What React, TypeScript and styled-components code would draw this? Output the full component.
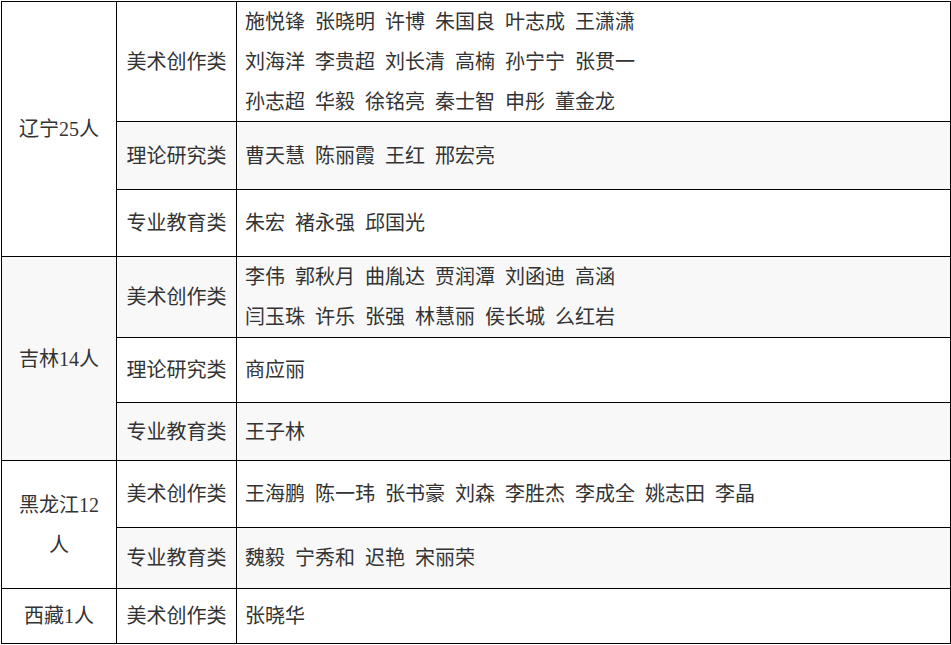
import styled, { createGlobalStyle } from "styled-components";

const GlobalStyle = createGlobalStyle`
  html, body {
    margin: 0;
    padding: 0;
    background: #ffffff;
  }
  body {
    font-family: "Liberation Serif", "Noto Sans CJK SC", serif;
    color: #333333;
  }
`;

const Page = styled.div`
  padding: 1px 0 0 1px;
`;

const Table = styled.div`
  display: grid;
  width: 950px;
  box-sizing: border-box;
  grid-template-columns: 115px 120px 714px;
  grid-template-rows: 120px 68px 67px 81px 65px 58px 67px 61px 55px;
  border-top: 1px solid #000;
  border-left: 1px solid #000;
`;

const Cell = styled.div<{ $shade?: boolean; $span?: number }>`
  box-sizing: border-box;
  border-right: 1px solid #000;
  border-bottom: 1px solid #000;
  background: ${(p) => (p.$shade ? "#f8f8f8" : "#ffffff")};
  grid-row: ${(p) => (p.$span ? `span ${p.$span}` : "auto")};
  display: flex;
  flex-direction: column;
  justify-content: center;
  font-size: 20px;
  line-height: 40px;
  padding: 0 8px;
  overflow: hidden;
`;

const RegionCell = styled(Cell)`
  align-items: center;
  text-align: center;
`;

const CategoryCell = styled(Cell)`
  align-items: center;
  white-space: nowrap;
`;

const NamesCell = styled(Cell)`
  align-items: flex-start;
`;

const NameLine = styled.div`
  display: flex;
  column-gap: 10px;
  white-space: nowrap;
`;

type Group = { category: string; lines: string[][] };
type Region = { name: string; groups: Group[] };

const regions: Region[] = [
  {
    name: "辽宁25人",
    groups: [
      {
        category: "美术创作类",
        lines: [
          ["施悦锋", "张晓明", "许博", "朱国良", "叶志成", "王潇潇"],
          ["刘海洋", "李贵超", "刘长清", "高楠", "孙宁宁", "张贯一"],
          ["孙志超", "华毅", "徐铭亮", "秦士智", "申彤", "董金龙"],
        ],
      },
      { category: "理论研究类", lines: [["曹天慧", "陈丽霞", "王红", "邢宏亮"]] },
      { category: "专业教育类", lines: [["朱宏", "褚永强", "邱国光"]] },
    ],
  },
  {
    name: "吉林14人",
    groups: [
      {
        category: "美术创作类",
        lines: [
          ["李伟", "郭秋月", "曲胤达", "贾润潭", "刘函迪", "高涵"],
          ["闫玉珠", "许乐", "张强", "林慧丽", "侯长城", "么红岩"],
        ],
      },
      { category: "理论研究类", lines: [["商应丽"]] },
      { category: "专业教育类", lines: [["王子林"]] },
    ],
  },
  {
    name: "黑龙江12人",
    groups: [
      {
        category: "美术创作类",
        lines: [["王海鹏", "陈一玮", "张书豪", "刘森", "李胜杰", "李成全", "姚志田", "李晶"]],
      },
      { category: "专业教育类", lines: [["魏毅", "宁秀和", "迟艳", "宋丽荣"]] },
    ],
  },
  {
    name: "西藏1人",
    groups: [{ category: "美术创作类", lines: [["张晓华"]] }],
  },
];

export default function App() {
  let row = 0;
  return (
    <Page>
      <GlobalStyle />
      <Table>
        {regions.map((region) =>
          region.groups.map((group, i) => {
            const shade = row % 2 === 1;
            row += 1;
            return [
              i === 0 && (
                <RegionCell key={region.name} $shade={shade} $span={region.groups.length}>
                  {region.name}
                </RegionCell>
              ),
              <CategoryCell key={`${region.name}-${group.category}-c`} $shade={shade}>
                {group.category}
              </CategoryCell>,
              <NamesCell key={`${region.name}-${group.category}-n`} $shade={shade}>
                {group.lines.map((line, j) => (
                  <NameLine key={j}>
                    {line.map((n) => (
                      <span key={n}>{n}</span>
                    ))}
                  </NameLine>
                ))}
              </NamesCell>,
            ];
          })
        )}
      </Table>
    </Page>
  );
}
